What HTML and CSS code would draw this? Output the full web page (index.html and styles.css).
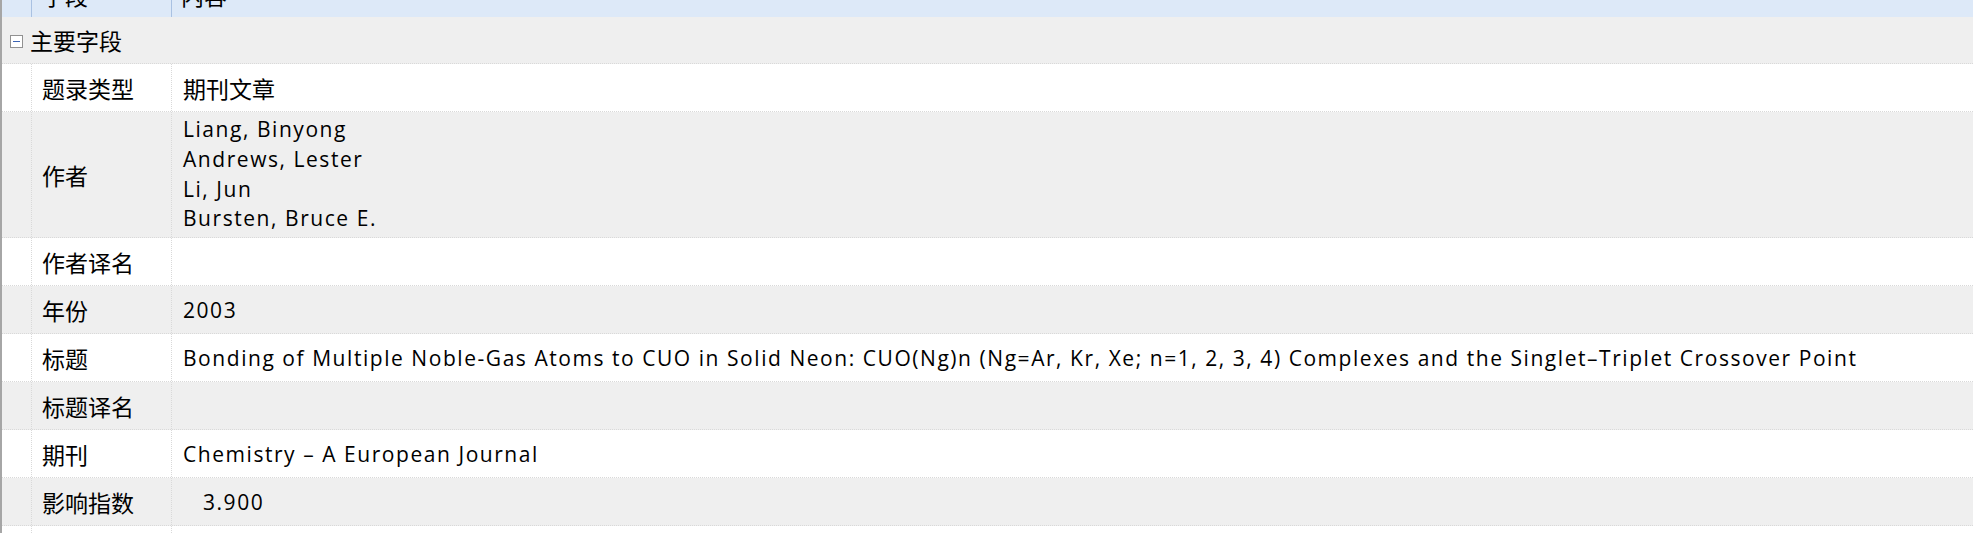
FILE: index.html
```html
<!DOCTYPE html>
<html lang="zh-CN">
<head>
<meta charset="utf-8">
<title>题录属性</title>
<link rel="stylesheet" href="styles.css">
</head>
<body>
<div class="grid">
  <div class="header">
    <div class="hcell h0"></div>
    <div class="hcell h1"><span class="htext">字段</span></div>
    <div class="hcell h2"><span class="htext">内容</span></div>
  </div>
  <div class="group">
    <span class="toggle"><span class="minus"></span></span>
    <span class="gtext">主要字段</span>
  </div>
  <div class="row white">
    <div class="c0"></div><div class="c1">题录类型</div><div class="c2">期刊文章</div>
  </div>
  <div class="row gray tall">
    <div class="c0"></div><div class="c1">作者</div>
    <div class="c2 latin multi"><div>Liang, Binyong</div><div>Andrews, Lester</div><div>Li, Jun</div><div>Bursten, Bruce E.</div></div>
  </div>
  <div class="row white">
    <div class="c0"></div><div class="c1">作者译名</div><div class="c2"></div>
  </div>
  <div class="row gray">
    <div class="c0"></div><div class="c1">年份</div><div class="c2 latin">2003</div>
  </div>
  <div class="row white">
    <div class="c0"></div><div class="c1">标题</div><div class="c2 latin">Bonding of Multiple Noble-Gas Atoms to CUO in Solid Neon: CUO(Ng)n (Ng=Ar, Kr, Xe; n=1, 2, 3, 4) Complexes and the Singlet–Triplet Crossover Point</div>
  </div>
  <div class="row gray">
    <div class="c0"></div><div class="c1">标题译名</div><div class="c2"></div>
  </div>
  <div class="row white">
    <div class="c0"></div><div class="c1">期刊</div><div class="c2 latin">Chemistry – A European Journal</div>
  </div>
  <div class="row gray">
    <div class="c0"></div><div class="c1">影响指数</div><div class="c2 latin num">3.900</div>
  </div>
  <div class="rest">
    <div class="c0"></div><div class="c1"></div><div class="c2"></div>
  </div>
</div>
</body>
</html>
```
FILE: styles.css
```css
html, body {
  margin: 0;
  padding: 0;
  background: #ffffff;
}
body {
  font-family: "Noto Sans CJK SC", "Noto Sans", sans-serif;
  font-size: 23px;
  color: #000;
  overflow: hidden;
}
.grid {
  border-left: 2px solid #a6a6a6;
  min-height: 533px;
  display: flex;
  flex-direction: column;
}
.header {
  display: flex;
  height: 17px;
  background: #dde9f8;
  overflow: hidden;
}
.hcell {
  height: 17px;
  overflow: hidden;
  box-sizing: border-box;
}
.h0 { width: 30px; border-right: 1px solid #a9c1e2; }
.h1 { width: 140px; border-right: 1px solid #a9c1e2; padding-left: 10px; }
.h2 { flex: 1; padding-left: 9px; }
.htext {
  display: block;
  line-height: 30px;
  margin-top: -20px;
  white-space: nowrap;
}
.group {
  display: flex;
  align-items: center;
  height: 46px;
  background: #efefef;
  border-bottom: 1px dotted #d9d9d9;
}
.toggle {
  width: 11px;
  height: 11px;
  margin-left: 8px;
  margin-right: 7px;
  margin-top: 2px;
  border: 1px solid #919191;
  background: #fff;
  display: flex;
  align-items: center;
  justify-content: center;
}
.minus {
  width: 7px;
  height: 1px;
  background: #3c64b4;
}
.row {
  display: flex;
  height: 47px;
  border-bottom: 1px dotted #d9d9d9;
}
.row.tall { height: 125px; }
.white { background: #ffffff; }
.gray { background: #efefef; }
.c0 {
  width: 29px;
  border-right: 1px dotted #d9d9d9;
}
.c1 {
  width: 129px;
  padding-left: 10px;
  border-right: 1px dotted #d9d9d9;
  display: flex;
  align-items: center;
  white-space: nowrap;
}
.c2 {
  flex: 1;
  padding-left: 11px;
  display: flex;
  align-items: center;
  white-space: nowrap;
}
.latin {
  font-family: "Open Sans", "Noto Sans", sans-serif;
  font-size: 21px;
  letter-spacing: 1.55px;
}
.multi {
  flex-direction: column;
  align-items: flex-start;
  justify-content: center;
  line-height: 29.6px;
}
.num { padding-left: 31px; }
.rest {
  flex: 1;
  display: flex;
}
```
